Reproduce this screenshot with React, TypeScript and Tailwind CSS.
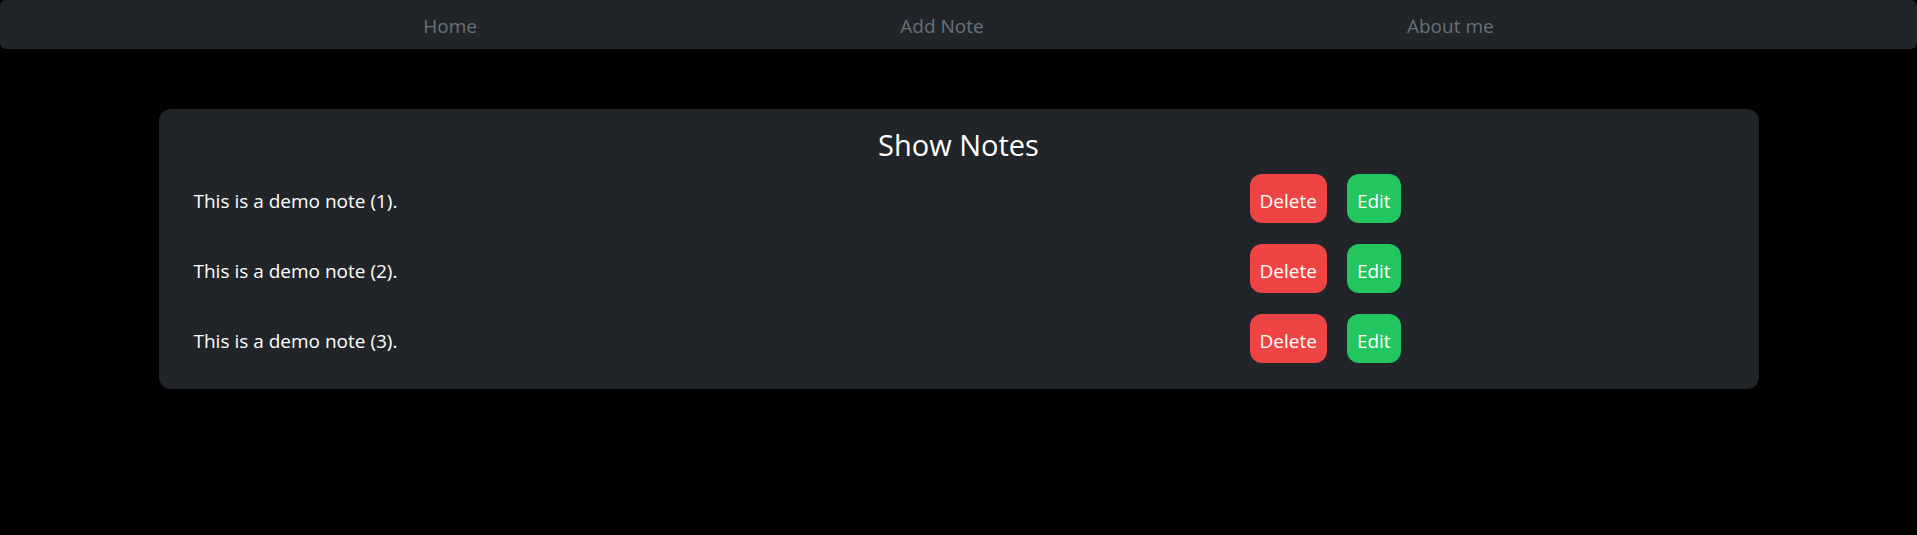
import { FC } from "react";

type Note = { id: number; text: string };

const notes: Note[] = [
  { id: 1, text: "This is a demo note (1)." },
  { id: 2, text: "This is a demo note (2)." },
  { id: 3, text: "This is a demo note (3)." },
];

const NavBar: FC = () => {
  return (
    <nav className="h-[49px] pt-[3px] bg-[#212529] rounded-[6px] flex justify-evenly items-center text-[19px] text-[#67717c]">
      <a href="#">Home</a>
      <a href="#">Add Note</a>
      <a href="#">About me</a>
    </nav>
  );
};

const NoteRow: FC<{ note: Note }> = ({ note }) => {
  return (
    <div className="flex items-center">
      {/* Note text */}
      <p className="w-[1056px] shrink-0 pt-[5px] text-[19px] text-white">
        {note.text}
      </p>

      {/* Actions */}
      <div className="flex gap-[20px]">
        <button className="h-[49px] px-[10px] pt-[5px] rounded-[12px] bg-[#ef4444] text-white text-[19px]">
          Delete
        </button>
        <button className="h-[49px] px-[10px] pt-[5px] rounded-[12px] bg-[#22c55e] text-white text-[19px]">
          Edit
        </button>
      </div>
    </div>
  );
};

const App: FC = () => {
  return (
    <div
      className="min-h-screen bg-black"
      style={{ fontFamily: '"Open Sans", sans-serif' }}
    >
      <NavBar />

      {/* Notes card */}
      <div className="w-[1600px] mx-auto mt-[60px] bg-[#212529] rounded-[12px] pt-[16px] pb-[26px] px-[35px]">
        <h1 className="text-center text-[29px] leading-[40px] text-white">
          Show Notes
        </h1>
        <div className="flex flex-col gap-[21px] mt-[9px]">
          {notes.map((note) => (
            <NoteRow key={note.id} note={note} />
          ))}
        </div>
      </div>
    </div>
  );
};

export default App;
